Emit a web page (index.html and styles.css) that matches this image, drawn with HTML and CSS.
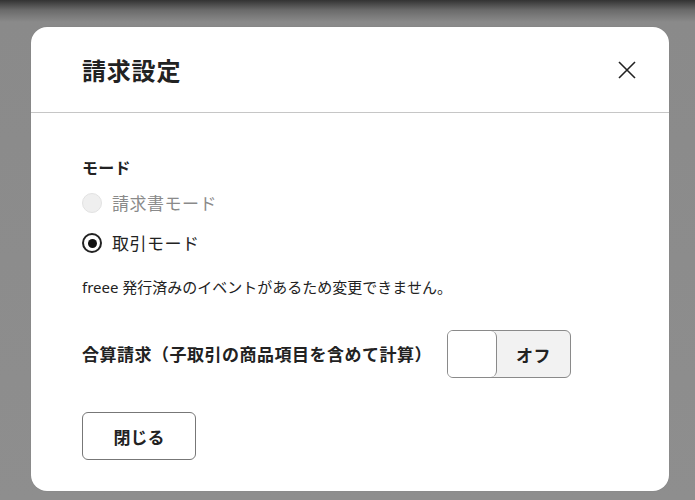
FILE: index.html
```html
<!DOCTYPE html>
<html lang="ja">
<head>
<meta charset="utf-8">
<title>請求設定</title>
<link rel="stylesheet" href="styles.css">
</head>
<body>
<div class="backdrop">
  <div class="modal" role="dialog" aria-labelledby="modal-title">
    <div class="modal-header">
      <h1 class="modal-title" id="modal-title">請求設定</h1>
      <button class="close-btn" type="button" aria-label="閉じる">
        <svg width="18" height="18" viewBox="0 0 18 18" aria-hidden="true">
          <path d="M1 1 L17 17 M17 1 L1 17" stroke="#222" stroke-width="1.6" fill="none"/>
        </svg>
      </button>
    </div>
    <div class="modal-body">
      <div class="field-label">モード</div>
      <div class="radio-group">
        <label class="radio-row disabled">
          <span class="radio"></span>
          <span class="radio-text">請求書モード</span>
        </label>
        <label class="radio-row">
          <span class="radio checked"></span>
          <span class="radio-text">取引モード</span>
        </label>
      </div>
      <p class="note">freee 発行済みのイベントがあるため変更できません。</p>
      <div class="toggle-row">
        <span class="toggle-label">合算請求（子取引の商品項目を含めて計算）</span>
        <div class="toggle">
          <span class="toggle-knob"></span>
          <span class="toggle-text">オフ</span>
        </div>
      </div>
      <button class="btn" type="button">閉じる</button>
    </div>
  </div>
</div>
</body>
</html>
```

FILE: styles.css
```css
* { box-sizing: border-box; }

html, body {
  margin: 0;
  padding: 0;
}

body {
  font-family: "Noto Sans", "Noto Sans CJK JP", sans-serif;
  color: #222;
}

.backdrop {
  width: 695px;
  height: 500px;
  padding: 27px 26px 9px 31px;
  background: linear-gradient(to bottom, #333 0px, #6a6a6a 10px, #8a8a8a 22px, #8e8e8e 100%);
  overflow: hidden;
}

.modal {
  width: 638px;
  height: 464px;
  background: #fff;
  border-radius: 16px;
  box-shadow: 0 0 1px rgba(0,0,0,0.2);
}

.modal-header {
  height: 86px;
  border-bottom: 1px solid #c6c6c6;
  display: flex;
  align-items: center;
  justify-content: space-between;
  padding: 0 30px 0 51px;
}

.modal-title {
  margin: 0;
  font-family: "Noto Sans CJK JP", sans-serif;
  font-size: 24px;
  font-weight: 700;
  line-height: 32px;
  letter-spacing: 0.8px;
  color: #222;
}

.close-btn {
  width: 24px;
  height: 24px;
  padding: 0;
  border: 0;
  background: transparent;
  display: flex;
  align-items: center;
  justify-content: center;
  cursor: pointer;
}

.modal-body {
  padding: 42px 51px 0 51px;
}

.field-label {
  font-family: "Noto Sans CJK JP", sans-serif;
  font-size: 16px;
  font-weight: 700;
  line-height: 24px;
  letter-spacing: 0.3px;
}

.radio-group {
  margin-top: 4px;
  display: flex;
  flex-direction: column;
}

.radio-row {
  height: 40px;
  display: flex;
  align-items: center;
  gap: 10px;
}

.radio {
  width: 20px;
  height: 20px;
  border-radius: 50%;
  border: 1px solid #e2e2e2;
  background: #efefef;
  display: flex;
  align-items: center;
  justify-content: center;
  flex: none;
}

.radio.checked {
  border: 2px solid #222;
  background: #fff;
}

.radio.checked::after {
  content: "";
  width: 9px;
  height: 9px;
  border-radius: 50%;
  background: #111;
}

.radio-text {
  font-family: "Noto Sans CJK JP", sans-serif;
  font-size: 17px;
  line-height: 24px;
  letter-spacing: 0.5px;
  color: #222;
}

.disabled .radio-text {
  color: #8a8a8a;
}

.note {
  margin: 12px 0 0 0;
  font-size: 15px;
  line-height: 24px;
  color: #222;
}

.toggle-row {
  margin-top: 31px;
  display: flex;
  align-items: center;
  gap: 15px;
}

.toggle-label {
  font-family: "Noto Sans CJK JP", sans-serif;
  font-size: 17px;
  font-weight: 700;
  line-height: 24px;
  letter-spacing: 0.5px;
}

.toggle {
  width: 124px;
  height: 48px;
  border: 1px solid #8a8a8a;
  border-radius: 6px;
  background: #f2f2f2;
  display: flex;
  overflow: hidden;
}

.toggle-knob {
  width: 49px;
  height: 100%;
  background: #fff;
  border-right: 1px solid #8a8a8a;
  border-radius: 0 6px 6px 0;
  flex: none;
}

.toggle-text {
  flex: 1;
  display: flex;
  align-items: center;
  justify-content: center;
  font-family: "Noto Sans CJK JP", sans-serif;
  font-size: 17px;
  font-weight: 700;
  letter-spacing: 0.5px;
}

.btn {
  margin-top: 34px;
  width: 114px;
  height: 48px;
  border: 1px solid #777;
  border-radius: 6px;
  background: #fff;
  font-family: "Noto Sans CJK JP", sans-serif;
  font-size: 17px;
  font-weight: 700;
  color: #222;
  cursor: pointer;
  display: flex;
  align-items: center;
  justify-content: center;
  padding: 0;
}
```
